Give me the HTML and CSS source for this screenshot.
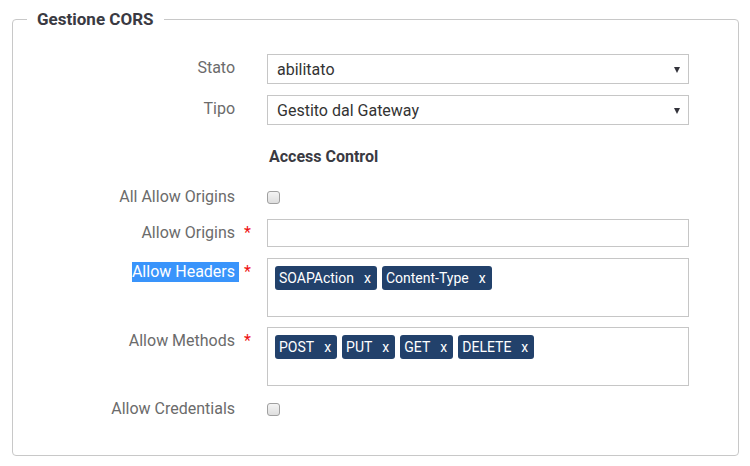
FILE: index.html
```html
<!DOCTYPE html>
<html>
<head>
<meta charset="utf-8">
<link rel="stylesheet" href="styles.css">
</head>
<body>
<fieldset class="panel">
  <legend class="panel-title">Gestione CORS</legend>

  <div class="row row-first">
    <div class="label"><span class="label-text">Stato&nbsp;</span><span class="req"></span></div>
    <div class="control select"><span>abilitato</span><span class="caret"></span></div>
  </div>

  <div class="row row-gap">
    <div class="label"><span class="label-text">Tipo&nbsp;</span><span class="req"></span></div>
    <div class="control select"><span>Gestito dal Gateway</span><span class="caret"></span></div>
  </div>

  <div class="section-title">Access Control</div>

  <div class="row row-check row-check-first">
    <div class="label"><span class="label-text">All Allow Origins&nbsp;</span><span class="req"></span></div>
    <div class="control-check"><span class="checkbox"></span></div>
  </div>

  <div class="row row-gap">
    <div class="label"><span class="label-text">Allow Origins&nbsp;</span><span class="req">*</span></div>
    <div class="control input"></div>
  </div>

  <div class="row row-gap">
    <div class="label"><span class="label-text selected">Allow Headers&nbsp;</span><span class="req">*</span></div>
    <div class="control tags">
      <span class="tag">SOAPAction<span class="tag-x">x</span></span>
      <span class="tag">Content-Type<span class="tag-x">x</span></span>
    </div>
  </div>

  <div class="row row-gap-sm">
    <div class="label"><span class="label-text">Allow Methods&nbsp;</span><span class="req">*</span></div>
    <div class="control tags">
      <span class="tag">POST<span class="tag-x">x</span></span>
      <span class="tag">PUT<span class="tag-x">x</span></span>
      <span class="tag">GET<span class="tag-x">x</span></span>
      <span class="tag">DELETE<span class="tag-x">x</span></span>
    </div>
  </div>

  <div class="row row-check row-check-last">
    <div class="label"><span class="label-text">Allow Credentials&nbsp;</span><span class="req"></span></div>
    <div class="control-check"><span class="checkbox"></span></div>
  </div>
</fieldset>
</body>
</html>
```
FILE: styles.css
```css
html, body {
  margin: 0;
  padding: 0;
  background: #ffffff;
}

body {
  font-family: Roboto, "Liberation Sans", sans-serif;
  font-size: 16px;
  color: #333333;
}

.panel {
  margin: 9px 11px 0 12px;
  padding: 0 0 35px 0;
  border: 1px solid #c8c8c8;
  border-radius: 4px;
  min-width: 0;
}

.panel-title {
  margin-left: 14px;
  padding: 0 10px;
  font-size: 17px;
  font-weight: 700;
  line-height: 20px;
  color: #3a3a42;
}

.row {
  display: flex;
  align-items: flex-start;
}

.row-first { margin-top: 25px; }
.row-gap { margin-top: 11px; }
.row-gap-sm { margin-top: 10px; }

.label {
  width: 238px;
  flex: 0 0 238px;
  display: flex;
  justify-content: flex-end;
  padding-top: 4px;
  line-height: 20px;
  color: #6b6b6b;
  white-space: nowrap;
}

.label-text.selected {
  background: #3994fb;
  color: #ffffff;
}

.req {
  width: 12px;
  padding-left: 5px;
  box-sizing: border-box;
  color: #ee1111;
  font-size: 16px;
}

.control {
  margin-left: 16px;
  width: 422px;
  box-sizing: border-box;
  border: 1px solid #c6c6c6;
  background: #ffffff;
}

.select {
  height: 30px;
  display: flex;
  align-items: center;
  justify-content: space-between;
  padding: 0 8px 0 9px;
  color: #333333;
}

.caret {
  width: 0;
  height: 0;
  border-left: 3.5px solid transparent;
  border-right: 3.5px solid transparent;
  border-top: 6px solid #33333b;
  margin-top: 1px;
}

.section-title {
  margin: 22px 0 0 256px;
  line-height: 20px;
  font-size: 16px;
  font-weight: 700;
  color: #3a3a42;
}

.row-check {
  align-items: center;
  height: 22px;
}

.row-check .label {
  padding-top: 0;
}

.row-check-first { margin-top: 19px; }
.row-check-last { margin-top: 12px; }

.control-check {
  margin-left: 16px;
  display: flex;
  align-items: center;
}

.checkbox {
  display: block;
  width: 11px;
  height: 11px;
  border: 1px solid #a0a0a0;
  border-radius: 3px;
  background: linear-gradient(#f4f4f4, #dedede);
}

.input {
  height: 28px;
}

.tags {
  height: 59px;
  padding: 7px;
  display: flex;
  align-items: flex-start;
  gap: 5px;
}

.tag {
  display: inline-flex;
  align-items: center;
  height: 24px;
  padding: 0 6px 0 4px;
  border-radius: 3px;
  background: #22416b;
  color: #ffffff;
  font-size: 14px;
  line-height: 24px;
  white-space: nowrap;
}

.tag-x {
  margin-left: 10px;
}
```
